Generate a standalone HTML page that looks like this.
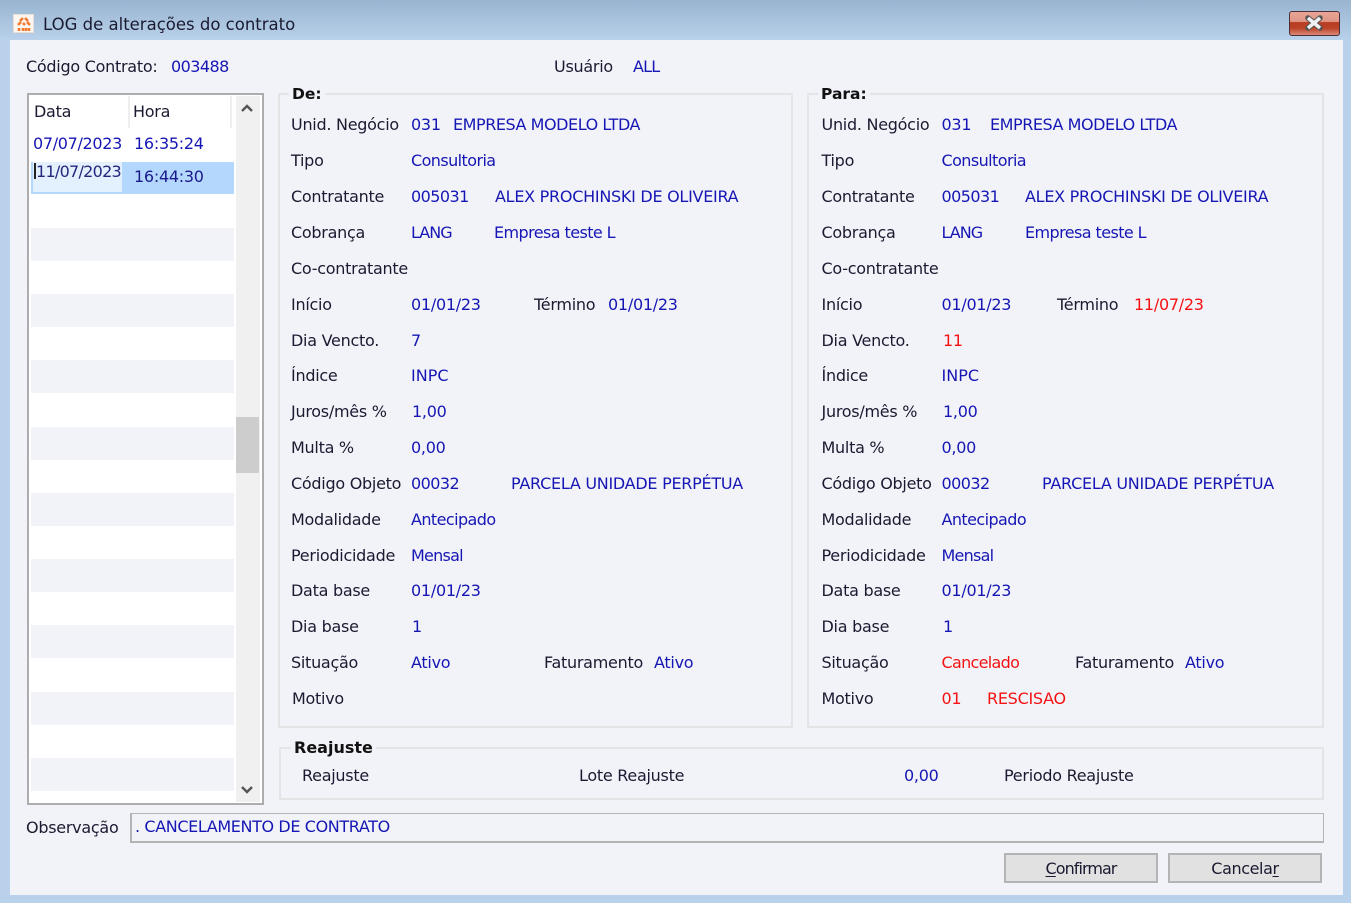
<!DOCTYPE html>
<html lang="pt"><head><meta charset="utf-8"><title>LOG de alterações do contrato</title>
<style>
html,body{margin:0;padding:0}
html{background:#b9d1ea}
body{width:1351px;height:903px;overflow:hidden;position:relative;background:#b9d1ea;font-family:"DejaVu Sans","Liberation Sans",sans-serif;font-size:16px;letter-spacing:-.27px;color:#1a1a30}
div,span{position:absolute;box-sizing:border-box}
.t{line-height:20px;height:20px;white-space:nowrap}
.b{color:#1616b4}
.r{color:#f41212}
.n{letter-spacing:-.55px}
.w{letter-spacing:-.45px}
.m{letter-spacing:-.58px}
.g{border:2px solid #e4e4e6}
.s{left:31px;width:203px;background:#f2f3f9}
.l{font-weight:bold;background:#f2f3f9;padding:0 3px;color:#111;letter-spacing:0;font-size:15.5px}
.btn{background:#e1e1e1;border:2px solid #b4b4b4;top:853px;width:154px;height:30px;text-align:center;line-height:27px}
u{text-underline-offset:2px}
</style></head><body>
<div style="left:0;top:0;width:1351px;height:40px;background:linear-gradient(#98b4d0,#b9d1ea)"></div>
<div style="left:10px;top:40px;width:1333px;height:855px;background:#f2f3f9"></div>

<div style="left:13px;top:14px;width:21px;height:19px;background:#fbf6f1;border:1px solid #eadfd6"></div>
<svg style="position:absolute;left:16px;top:16px" width="16" height="16" viewBox="0 0 16 16"><g fill="none" stroke="#f47a30" stroke-width="2.6"><path d="M4 5 7 2M9 2l3 3M2 9l3-3M7 7l2 2M14 9l-3-3M3 15v-3M7 15v-3M10 15v-3M13 15v-3"/></g></svg>
<div class="t" style="left:43px;top:15px;font-size:16.5px;letter-spacing:0">LOG de alterações do contrato</div>

<div style="left:1289px;top:11px;width:51px;height:25px;border:1px solid #4b2f38;border-radius:3px;background:linear-gradient(#e8a595 0,#e09585 42%,#b83d22 45%,#bb4226 70%,#dc8a79 100%)"></div>
<svg style="position:absolute;left:1303px;top:15px" width="22" height="16" viewBox="0 0 22 16"><path d="M5 3 17 13M17 3 5 13" stroke="#555" stroke-width="5.5" stroke-linecap="round"/><path d="M5 3 17 13M17 3 5 13" stroke="#f0f0f0" stroke-width="3.5"/></svg>

<div class="t" style="left:26px;top:57px">Código Contrato:</div>
<div class="t b n" style="left:171px;top:57px">003488</div>
<div class="t" style="left:554px;top:57px">Usuário</div>
<div class="t b" style="left:633px;top:57px;letter-spacing:-.8px">ALL</div>

<!-- list -->
<div style="left:27px;top:93px;width:237px;height:712px;background:#fff;border:2px solid #adadb0"></div>
<div style="left:128px;top:96px;width:2px;height:32px;background:#eee"></div>
<div style="left:230px;top:96px;width:2px;height:32px;background:#eee"></div>
<div class="t" style="left:34px;top:102px">Data</div>
<div class="t" style="left:133px;top:102px">Hora</div>
<div class="t b" style="left:33px;top:134px;letter-spacing:-.33px">07/07/2023</div>
<div class="t b" style="left:134px;top:134px">16:35:24</div>
<div style="left:31px;top:162px;width:203px;height:32px;background:#b3d7fd"></div>
<div style="left:33px;top:162px;width:89px;height:30px;background:#e3f0fd"></div>
<div style="left:34px;top:163px;width:2px;height:16px;background:#222"></div>
<div class="t b" style="left:36px;top:162px;color:#26267e;letter-spacing:-.72px">11/07/2023</div>
<div class="t b" style="left:134px;top:167px;color:#1a1a8c">16:44:30</div>
<div class="s" style="top:228px;height:33px"></div>
<div class="s" style="top:294px;height:33px"></div>
<div class="s" style="top:360px;height:33px"></div>
<div class="s" style="top:427px;height:33px"></div>
<div class="s" style="top:493px;height:33px"></div>
<div class="s" style="top:559px;height:33px"></div>
<div class="s" style="top:625px;height:33px"></div>
<div class="s" style="top:692px;height:33px"></div>
<div class="s" style="top:758px;height:33px"></div>
<div style="left:236px;top:96px;width:24px;height:706px;background:#f0f0f0"></div>
<div style="left:236px;top:417px;width:23px;height:56px;background:#cdcdcd"></div>
<svg style="position:absolute;left:240px;top:102px" width="14" height="12" viewBox="0 0 14 12"><path d="M2 9 7 4l5 5" fill="none" stroke="#555" stroke-width="2.4"/></svg>
<svg style="position:absolute;left:240px;top:784px" width="14" height="12" viewBox="0 0 14 12"><path d="M2 3l5 5 5-5" fill="none" stroke="#555" stroke-width="2.4"/></svg>

<!-- De -->
<div class="g" style="left:278px;top:93px;width:515px;height:635px"></div>
<div class="t l" style="left:289px;top:84px">De:</div>
<div class="t" style="left:291px;top:115px">Unid. Negócio</div><div class="t b" style="left:411px;top:115px">031</div><div class="t b w" style="left:453px;top:115px">EMPRESA MODELO LTDA</div>
<div class="t" style="left:291px;top:151px">Tipo</div><div class="t b m" style="left:411px;top:151px">Consultoria</div>
<div class="t" style="left:291px;top:187px">Contratante</div><div class="t b n" style="left:411px;top:187px">005031</div><div class="t b" style="left:495px;top:187px">ALEX PROCHINSKI DE OLIVEIRA</div>
<div class="t" style="left:291px;top:223px">Cobrança</div><div class="t b" style="left:411px;top:223px;letter-spacing:-1px">LANG</div><div class="t b m" style="left:494px;top:223px">Empresa teste L</div>
<div class="t" style="left:291px;top:259px">Co-contratante</div>
<div class="t" style="left:291px;top:295px">Início</div><div class="t b" style="left:411px;top:295px">01/01/23</div><div class="t" style="left:534px;top:295px">Término</div><div class="t b" style="left:608px;top:295px">01/01/23</div>
<div class="t" style="left:291px;top:331px">Dia Vencto.</div><div class="t b" style="left:411px;top:331px">7</div>
<div class="t" style="left:291px;top:366px">Índice</div><div class="t b" style="left:411px;top:366px;letter-spacing:0">INPC</div>
<div class="t" style="left:291px;top:402px">Juros/mês %</div><div class="t b" style="left:412px;top:402px">1,00</div>
<div class="t" style="left:291px;top:438px">Multa %</div><div class="t b" style="left:411px;top:438px">0,00</div>
<div class="t" style="left:291px;top:474px">Código Objeto</div><div class="t b n" style="left:411px;top:474px">00032</div><div class="t b" style="left:511px;top:474px">PARCELA UNIDADE PERPÉTUA</div>
<div class="t" style="left:291px;top:510px">Modalidade</div><div class="t b m" style="left:411px;top:510px">Antecipado</div>
<div class="t" style="left:291px;top:546px">Periodicidade</div><div class="t b" style="left:411px;top:546px;letter-spacing:-.75px">Mensal</div>
<div class="t" style="left:291px;top:581px">Data base</div><div class="t b" style="left:411px;top:581px">01/01/23</div>
<div class="t" style="left:291px;top:617px">Dia base</div><div class="t b" style="left:412px;top:617px">1</div>
<div class="t" style="left:291px;top:653px">Situação</div><div class="t b" style="left:411px;top:653px">Ativo</div><div class="t" style="left:544px;top:653px">Faturamento</div><div class="t b" style="left:654px;top:653px">Ativo</div>
<div class="t" style="left:292px;top:689px">Motivo</div>

<!-- Para -->
<div class="g" style="left:807px;top:93px;width:517px;height:635px"></div>
<div class="t l" style="left:818px;top:84px">Para:</div>
<div class="t" style="left:821.5px;top:115px">Unid. Negócio</div><div class="t b" style="left:941.5px;top:115px">031</div><div class="t b w" style="left:990px;top:115px">EMPRESA MODELO LTDA</div>
<div class="t" style="left:821.5px;top:151px">Tipo</div><div class="t b m" style="left:941.5px;top:151px">Consultoria</div>
<div class="t" style="left:821.5px;top:187px">Contratante</div><div class="t b n" style="left:941.5px;top:187px">005031</div><div class="t b" style="left:1025px;top:187px">ALEX PROCHINSKI DE OLIVEIRA</div>
<div class="t" style="left:821.5px;top:223px">Cobrança</div><div class="t b" style="left:941.5px;top:223px;letter-spacing:-1px">LANG</div><div class="t b m" style="left:1025px;top:223px">Empresa teste L</div>
<div class="t" style="left:821.5px;top:259px">Co-contratante</div>
<div class="t" style="left:821.5px;top:295px">Início</div><div class="t b" style="left:941.5px;top:295px">01/01/23</div><div class="t" style="left:1057px;top:295px">Término</div><div class="t r" style="left:1134px;top:295px">11/07/23</div>
<div class="t" style="left:821.5px;top:331px">Dia Vencto.</div><div class="t r" style="left:943px;top:331px">11</div>
<div class="t" style="left:821.5px;top:366px">Índice</div><div class="t b" style="left:941.5px;top:366px;letter-spacing:0">INPC</div>
<div class="t" style="left:821.5px;top:402px">Juros/mês %</div><div class="t b" style="left:943px;top:402px">1,00</div>
<div class="t" style="left:821.5px;top:438px">Multa %</div><div class="t b" style="left:941.5px;top:438px">0,00</div>
<div class="t" style="left:821.5px;top:474px">Código Objeto</div><div class="t b n" style="left:941.5px;top:474px">00032</div><div class="t b" style="left:1042px;top:474px">PARCELA UNIDADE PERPÉTUA</div>
<div class="t" style="left:821.5px;top:510px">Modalidade</div><div class="t b m" style="left:941.5px;top:510px">Antecipado</div>
<div class="t" style="left:821.5px;top:546px">Periodicidade</div><div class="t b" style="left:941.5px;top:546px;letter-spacing:-.75px">Mensal</div>
<div class="t" style="left:821.5px;top:581px">Data base</div><div class="t b" style="left:941.5px;top:581px">01/01/23</div>
<div class="t" style="left:821.5px;top:617px">Dia base</div><div class="t b" style="left:943px;top:617px">1</div>
<div class="t" style="left:821.5px;top:653px">Situação</div><div class="t r" style="left:941.5px;top:653px;letter-spacing:-.7px">Cancelado</div><div class="t" style="left:1075px;top:653px">Faturamento</div><div class="t b" style="left:1185px;top:653px">Ativo</div>
<div class="t" style="left:821.5px;top:689px">Motivo</div><div class="t r" style="left:941.5px;top:689px">01</div><div class="t r" style="left:987px;top:689px">RESCISAO</div>

<!-- Reajuste -->
<div class="g" style="left:279px;top:747px;width:1045px;height:53px"></div>
<div class="t l" style="left:291px;top:738px;font-size:16px">Reajuste</div>
<div class="t" style="left:302px;top:766px">Reajuste</div>
<div class="t" style="left:579px;top:766px">Lote Reajuste</div>
<div class="t b" style="left:904px;top:766px">0,00</div>
<div class="t" style="left:1004px;top:766px">Periodo Reajuste</div>

<!-- Obs -->
<div class="t" style="left:26px;top:818px">Observação</div>
<div style="left:130px;top:813px;width:1194px;height:30px;border:1px solid #b4b4b4;border-width:1px 1px 2px 2px"></div>
<div class="t b" style="left:135px;top:817px;letter-spacing:-.38px">. CANCELAMENTO DE CONTRATO</div>

<div class="btn" style="left:1004px;letter-spacing:-.95px"><u>C</u>onfirmar</div>
<div class="btn" style="left:1168px;letter-spacing:-.4px">Cancela<u>r</u></div>
</body></html>
